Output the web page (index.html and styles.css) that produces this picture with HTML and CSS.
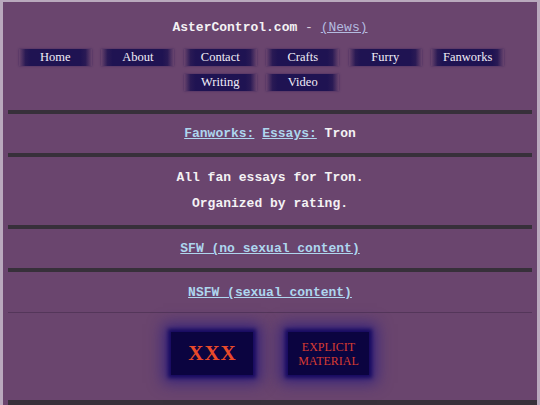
FILE: index.html
```html
<!DOCTYPE html>
<html>
<head>
<meta charset="utf-8">
<link rel="stylesheet" href="styles.css">
</head>
<body>
<div class="page">
  <div class="title"><b>AsterControl.com</b> <span class="dash">-</span> <a class="news" href="#">(News)</a></div>
  <nav class="nav">
    <a class="btn" href="#">Home</a>
    <a class="btn" href="#">About</a>
    <a class="btn" href="#">Contact</a>
    <a class="btn" href="#">Crafts</a>
    <a class="btn" href="#">Furry</a>
    <a class="btn" href="#">Fanworks</a>
    <a class="btn" href="#">Writing</a>
    <a class="btn" href="#">Video</a>
  </nav>
  <div class="bar"></div>
  <div class="sec"><a class="lnk" href="#">Fanworks:</a> <a class="lnk" href="#">Essays:</a> Tron</div>
  <div class="bar"></div>
  <div class="sec intro">
    <p>All fan essays for Tron.</p>
    <p>Organized by rating.</p>
  </div>
  <div class="bar"></div>
  <div class="sec"><a class="lnk" href="#">SFW (no sexual content)</a></div>
  <div class="bar"></div>
  <div class="sec last"><a class="lnk" href="#">NSFW (sexual content)</a></div>
  <div class="thin"></div>
  <div class="badges">
    <div class="badge xxx">XXX</div>
    <div class="badge explicit">EXPLICIT<br>MATERIAL</div>
  </div>
  <div class="bar bottom"></div>
</div>
</body>
</html>
```
FILE: styles.css
```css
html, body {
  margin: 0;
  padding: 0;
  background: #b9a9bd;
}
.page {
  margin: 2px 3px 0 3px;
  background: #6a456e;
  height: 403px;
  overflow: hidden;
  font-family: "Liberation Mono", "Courier New", monospace;
  font-size: 13px;
  line-height: 15px;
  color: #f4f2f4;
  text-align: center;
}
.title {
  padding-top: 18px;
  height: 15px;
}
.title b { font-weight: bold; }
.dash { color: #d8d0dc; }
.news {
  color: #b4bce0;
  text-decoration: underline;
}
.nav {
  display: flex;
  flex-wrap: wrap;
  justify-content: center;
  gap: 8px 9.5px;
  margin-top: 14px;
  padding-right: 17px;
}
.btn {
  width: 73px;
  height: 17px;
  line-height: 17px;
  font-family: "Liberation Serif", "Times New Roman", serif;
  font-size: 12.5px;
  color: #f2eef8;
  text-decoration: none;
  background: linear-gradient(to right, rgba(30,18,80,0) 0%, rgba(30,18,80,0.85) 9%, #1f1352 16%, #1f1352 84%, rgba(30,18,80,0.85) 91%, rgba(30,18,80,0) 100%);
  box-shadow: 0 0 2px 0 rgba(30,18,80,0.5);
}
.bar {
  height: 4px;
  margin: 0 5px;
  background: #37303a;
}
.nav + .bar { margin-top: 19px; }
.sec {
  padding: 12px 0;
  font-weight: bold;
}
.sec.intro { padding: 13px 0 14px; }
.sec.last { padding: 13px 0 12px; }
.intro p { margin: 0; }
.intro p + p { margin-top: 11px; }
.lnk {
  color: #aed6ee;
  text-decoration: underline;
}
.thin {
  height: 1px;
  margin: 0 5px;
  background: #54365a;
}
.badges {
  display: flex;
  justify-content: center;
  gap: 35px;
  padding-top: 19px;
  height: 68px;
}
.badge {
  width: 81px;
  height: 43px;
  background: #0b0440;
  box-shadow: 0 0 4px 3px #160a60, 0 0 14px 8px rgba(36,24,130,0.7);
  display: flex;
  align-items: center;
  justify-content: center;
  font-family: "Liberation Serif", "Times New Roman", serif;
}
.xxx {
  color: #ea4a2a;
  font-size: 21px;
  font-weight: bold;
  letter-spacing: 1px;
  padding-left: 1px;
}
.explicit {
  color: #d83c32;
  font-size: 12px;
  line-height: 14px;
}
.bar.bottom {
  height: 6px;
  margin: 0 0 0 5px;
}
```
